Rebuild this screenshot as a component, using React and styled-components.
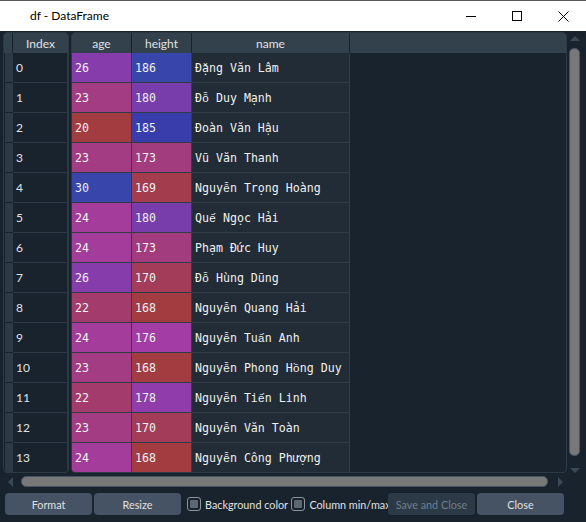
import React from "react";
import styled, { createGlobalStyle } from "styled-components";

const UI_FONT = `Lato, "Open Sans", "Liberation Sans", sans-serif`;
const MONO = `"DejaVu Sans Mono", "Liberation Mono", monospace`;

const rows = [
    [26, 186, "Đặng Văn Lâm"],
    [23, 180, "Đỗ Duy Mạnh"],
    [20, 185, "Đoàn Văn Hậu"],
    [23, 173, "Vũ Văn Thanh"],
    [30, 169, "Nguyễn Trọng Hoàng"],
    [24, 180, "Quế Ngọc Hải"],
    [24, 173, "Phạm Đức Huy"],
    [26, 170, "Đỗ Hùng Dũng"],
    [22, 168, "Nguyễn Quang Hải"],
    [24, 176, "Nguyễn Tuấn Anh"],
    [23, 168, "Nguyễn Phong Hồng Duy"],
    [22, 178, "Nguyễn Tiến Linh"],
    [23, 170, "Nguyễn Văn Toàn"],
    [24, 168, "Nguyễn Công Phượng"],
];

// same gradient as the spyder dataframe editor: blue at max, red at min
function cellColor(value, min, max) {
    const h = (0.65 + 0.35 * (max - value) / (max - min)) % 1;
    const s = 0.7, v = 1;
    const i = Math.floor(h * 6);
    const f = h * 6 - i;
    const p = v * (1 - s), q = v * (1 - f * s), t = v * (1 - (1 - f) * s);
    const [r, g, b] = [
        [v, t, p], [q, v, p], [p, v, t], [p, q, v], [t, p, v], [v, p, q],
    ][i % 6];
    return `rgba(${Math.round(r * 255)}, ${Math.round(g * 255)}, ${Math.round(b * 255)}, 0.6)`;
}

const ages = rows.map(r => r[0]);
const heights = rows.map(r => r[1]);

// dejavu mono has no precomposed glyphs for letters with two marks on top
const stacked = /[\u1EA4-\u1EAB\u1EAE-\u1EB5\u1EBE-\u1EC5\u1ED0-\u1ED7]/;

const GlobalStyle = createGlobalStyle`
    html, body { margin: 0; padding: 0; background: #19232d; }
    * { box-sizing: border-box; }
`;

const Window = styled.div`
    width: 586px;
    height: 522px;
    display: flex;
    flex-direction: column;
    background: #19232d;
    overflow: hidden;
`;

const TitleBar = styled.div`
    height: 31px;
    flex: none;
    background: #ffffff;
    border-top: 1px solid #5a5a5a;
    display: flex;
    align-items: center;
    font-family: ${UI_FONT};
    font-size: 12px;
    color: #000;
`;

const Title = styled.div`
    flex: 1;
    padding-left: 30px;
    padding-bottom: 1px;
`;

const WinButton = styled.div`
    width: 46px;
    height: 30px;
    display: flex;
    align-items: center;
    justify-content: center;
`;

const Body = styled.div`
    flex: 1;
    display: flex;
    flex-direction: column;
    padding: 1px 5px 7px 3px;
`;

const TableArea = styled.div`
    height: 441px;
    display: flex;
    gap: 1px;
`;

const Frame = styled.div`
    border: 1px solid #2c3843;
    border-radius: 4px;
    overflow: hidden;
    width: ${p => p.$width ? p.$width + "px" : "auto"};
    flex: ${p => p.$width ? "none" : "1"};
    margin-right: ${p => p.$gap || 0}px;
    display: flex;
    flex-direction: column;
`;

const HeaderRow = styled.div`
    height: 20px;
    flex: none;
    display: flex;
    gap: 1px;
    background: #19232d;
`;

const HeaderCell = styled.div`
    width: ${p => p.$w ? p.$w + "px" : "auto"};
    flex: ${p => p.$w ? "none" : "1"};
    background: #32414b;
    color: #e0e1e3;
    font-family: ${UI_FONT};
    font-size: 12px;
    display: flex;
    align-items: center;
    justify-content: center;
`;

const Row = styled.div`
    height: 30px;
    flex: none;
    display: flex;
`;

const VHeader = styled.div`
    width: 8px;
    flex: none;
    background: #2d3a45;
    border-bottom: 1px solid #19232d;
    margin-left: 1px;
`;

const IndexCell = styled.div`
    flex: 1;
    padding-left: 3px;
    display: flex;
    align-items: center;
    color: #e0e1e3;
    font-family: ${UI_FONT};
    font-size: 12px;
    border-bottom: 1px solid #2c3843;
    border-right: 1px solid #2c3843;
`;

const Cell = styled.div`
    width: ${p => p.$w}px;
    flex: none;
    padding-left: 3px;
    display: flex;
    align-items: center;
    font-family: ${MONO};
    font-size: 11.6px;
    color: #f0f0f0;
    white-space: pre;
    background: ${p => p.$bg || "#222c36"};
    border-right: 1px solid #323c47;
    border-bottom: 1px solid #323c47;
`;

const Accent = styled.span`
    font-family: "Liberation Mono", "DejaVu Sans", monospace;
`;

const VScroll = styled.div`
    width: 13px;
    flex: none;
    display: flex;
    flex-direction: column;
    align-items: center;
    padding-top: 4px;
`;

const Handle = styled.div`
    background: #787878;
    border: 1px solid #455364;
    border-radius: 5px;
    ${p => p.$vertical ? "width: 11px; flex: 1; margin: 7px 0 12px;" : "height: 11px; flex: 1; margin: 0 10px 0 8px;"}
`;

const HScroll = styled.div`
    height: 11px;
    margin-top: 3px;
    display: flex;
    align-items: center;
    padding: 0 18px 0 5px;
`;

const ButtonBar = styled.div`
    margin-top: 6px;
    height: 22px;
    display: flex;
    align-items: center;
    padding: 0 17px 0 2px;
    font-family: ${UI_FONT};
    font-size: 10.8px;
`;

const Button = styled.div`
    width: 87px;
    height: 22px;
    flex: none;
    position: relative;
    margin-right: ${p => p.$mr || 0}px;
    margin-left: ${p => p.$push ? "auto" : "0"};
    border-radius: 4px;
    display: flex;
    align-items: center;
    justify-content: center;
    white-space: nowrap;
    background: ${p => p.$disabled ? "#2c3a47" : "#455364"};
    color: ${p => p.$disabled ? "#6f7f8c" : "#e0e1e3"};
`;

const Check = styled.label`
    display: flex;
    flex: 0 1 auto;
    min-width: 0;
    align-items: center;
    color: #e0e1e3;
    margin-left: ${p => p.$ml || 0}px;
    gap: 4px;
    white-space: nowrap;
`;

const Box = styled.span`
    width: 14px;
    height: 14px;
    flex: none;
    border: 1px solid #8a959e;
    border-radius: 3px;
    background: #19232d;
    display: flex;
    align-items: center;
    justify-content: center;
    &::after {
        content: "";
        width: 8px;
        height: 8px;
        background: #5b6670;
        border-radius: 1px;
    }
`;

const Arrow = ({ dir }) => {
    const pts = {
        up: "0,5 5,0 10,5",
        down: "0,0 5,5 10,0",
        left: "5,0 0,5 5,10",
        right: "0,0 5,5 0,10",
    }[dir];
    const vertical = dir === "up" || dir === "down";
    return (
        <svg width={vertical ? 10 : 5} height={vertical ? 5 : 10} style={{ flex: "none" }}>
            <polygon points={pts} fill="#3a4a57" />
        </svg>
    );
};

const NameText = ({ text }) => (
    <span>
        {[...text].map((ch, i) => stacked.test(ch) ? <Accent key={i}>{ch}</Accent> : ch)}
    </span>
);

export default function App() {
    return (
        <Window>
            <GlobalStyle />
            <TitleBar>
                <Title>df - DataFrame</Title>
                <WinButton>
                    <svg width="10" height="10"><path d="M0 5.5H10" stroke="#000" /></svg>
                </WinButton>
                <WinButton>
                    <svg width="10" height="10"><rect x="0.5" y="0.5" width="9" height="9" fill="none" stroke="#000" /></svg>
                </WinButton>
                <WinButton>
                    <svg width="11" height="11"><path d="M0.5 0.5L10.5 10.5M10.5 0.5L0.5 10.5" stroke="#000" /></svg>
                </WinButton>
            </TitleBar>
            <Body>
                <TableArea>
                    <Frame $width={66} $gap={1}>
                        <HeaderRow>
                            <HeaderCell $w={8} />
                            <HeaderCell>Index</HeaderCell>
                        </HeaderRow>
                        {rows.map((r, i) => (
                            <Row key={i}>
                                <VHeader />
                                <IndexCell>{i}</IndexCell>
                            </Row>
                        ))}
                    </Frame>
                    <Frame>
                        <HeaderRow>
                            <HeaderCell $w={59}>age</HeaderCell>
                            <HeaderCell $w={59}>height</HeaderCell>
                            <HeaderCell $w={157}>name</HeaderCell>
                            <HeaderCell />
                        </HeaderRow>
                        {rows.map(([age, height, name], i) => (
                            <Row key={i}>
                                <Cell $w={60} $bg={cellColor(age, Math.min(...ages), Math.max(...ages))}>{age}</Cell>
                                <Cell $w={60} $bg={cellColor(height, Math.min(...heights), Math.max(...heights))}>{height}</Cell>
                                <Cell $w={158}><NameText text={name} /></Cell>
                            </Row>
                        ))}
                    </Frame>
                    <VScroll>
                        <Arrow dir="up" />
                        <Handle $vertical />
                        <Arrow dir="down" />
                    </VScroll>
                </TableArea>
                <HScroll>
                    <Arrow dir="left" />
                    <Handle />
                    <Arrow dir="right" />
                </HScroll>
                <ButtonBar>
                    <Button $mr={2}>Format</Button>
                    <Button>Resize</Button>
                    <Check $ml={6}><Box />Background color</Check>
                    <Check $ml={6}><Box />Column min/max</Check>
                    <Button $disabled $push $mr={2}>Save and Close</Button>
                    <Button>Close</Button>
                </ButtonBar>
            </Body>
        </Window>
    );
}
